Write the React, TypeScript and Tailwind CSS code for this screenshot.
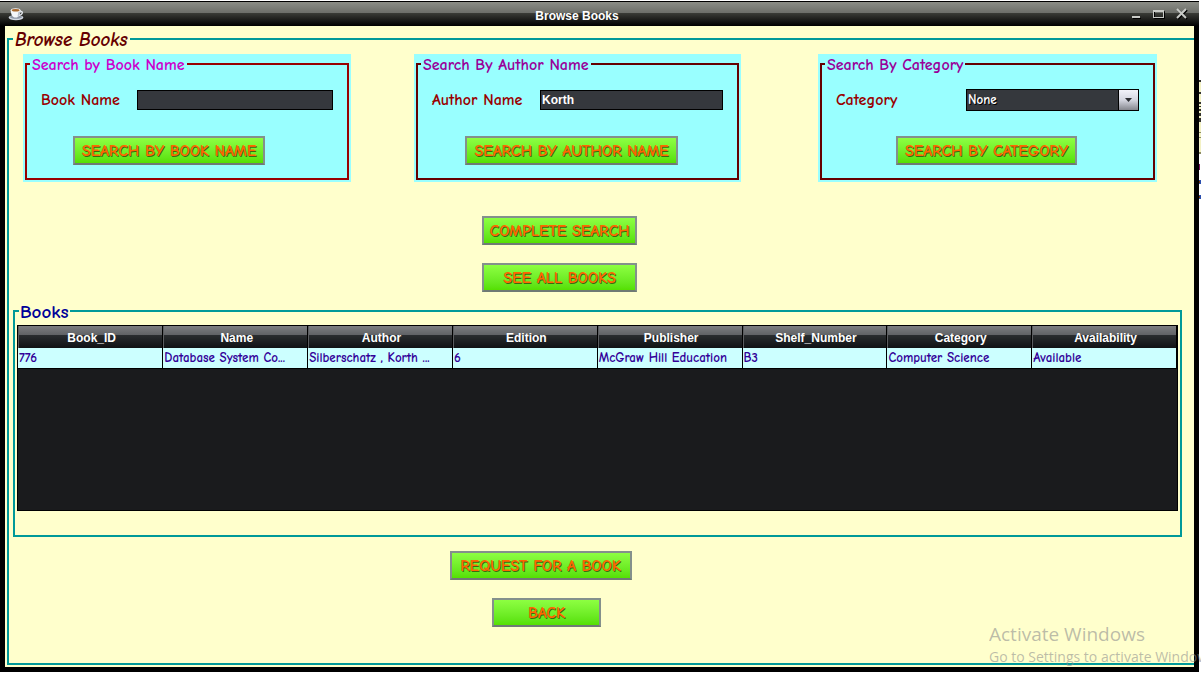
import type { ReactNode } from "react";

const comic = "font-['Comic_Sans_MS','Comic_Neue','Open_Sans',sans-serif]";

const columns = [
  "Book_ID",
  "Name",
  "Author",
  "Edition",
  "Publisher",
  "Shelf_Number",
  "Category",
  "Availability",
];

const books = [
  [
    "776",
    "Database System Co...",
    "Silberschatz , Korth ...",
    "6",
    "McGraw Hill Education",
    "B3",
    "Computer Science",
    "Available",
  ],
];

function CupIcon() {
  return (
    <svg width="17" height="14" viewBox="0 0 17 14" aria-hidden="true">
      <ellipse cx="8" cy="10.6" rx="7.4" ry="2.7" fill="#d3d9e3" />
      <ellipse cx="8" cy="10" rx="6" ry="1.8" fill="#8e97a6" />
      <path d="M12 4.5c3-.8 3.600 3 -1 3.800" fill="none" stroke="#e8ecf2" strokeWidth="1.300" />
      <path d="M2.800 3.200c0 4 1.400 7.300 4.800 7.300s4.900-3.300 4.900-7.300z" fill="#f4f6fa" />
      <path d="M9.500 9.800c2-1.200 3-3.600 3-6.600l-2 1z" fill="#b9c1ce" />
      <ellipse cx="7.650" cy="3.200" rx="4.900" ry="2" fill="#f7f7f7" />
      <ellipse cx="7.650" cy="3.300" rx="3.900" ry="1.300" fill="#a8682c" />
    </svg>
  );
}

function TitleBar() {
  const button = "flex h-4 w-[17px] items-center justify-center";
  return (
    <header className="grid h-[25px] shrink-0 grid-cols-[1fr_auto_1fr] items-center border-t border-black bg-[linear-gradient(#8b8d86_0,#6c6e69_11px,#3a3c37_11px,#000_24px)] pl-2 pr-[9px]">
      <CupIcon />
      <h1 className="pt-1 pr-[44px] font-['Liberation_Sans',sans-serif] text-[12px] leading-[16px] font-bold text-white">
        Browse Books
      </h1>
      <div className="flex justify-end gap-[6px]">
        <button type="button" aria-label="Minimize" className={button}>
          <svg width="14" height="14" viewBox="0 0 14 14">
            <path d="M4 11h8v1H4z" fill="#000" />
            <path d="M3 9h8v2H3z" fill="#c9cbc7" />
          </svg>
        </button>
        <button type="button" aria-label="Maximize" className={button}>
          <svg width="14" height="14" viewBox="0 0 14 14">
            <path d="M2.500 4.500h10v7h-10z" fill="none" stroke="#000" />
            <path d="M1 3h11v8H1zM2 5v5h9V5z" fillRule="evenodd" fill="#c9cbc7" />
          </svg>
        </button>
        <button type="button" aria-label="Close" className={button}>
          <svg width="14" height="14" viewBox="0 0 14 14" fill="none" strokeWidth="2">
            <path d="M3 3l9 9M12 3l-9 9" stroke="#000" />
            <path d="M2 2l9 9M11 2l-9 9" stroke="#c9cbc7" />
          </svg>
        </button>
      </div>
    </header>
  );
}

function GreenButton({ width, children }: { width: string; children: ReactNode }) {
  return (
    <button
      type="button"
      className={`${comic} ${width} h-[29px] shrink-0 whitespace-nowrap border-2 border-[#84908c] border-b-[#6f7a74] bg-linear-to-b from-[#8dff41] to-[#55e000] text-[16px] leading-[20px] font-bold text-[#ff6600] [text-shadow:1px_1px_0_#3a6a10]`}
    >
      {children}
    </button>
  );
}

type PanelProps = {
  title: string;
  place: string;
  border: string;
  titleColor: string;
  field: ReactNode;
  action: ReactNode;
  actionPad: string;
};

function SearchPanel({ title, place, border, titleColor, field, action, actionPad }: PanelProps) {
  return (
    <form className={`${place} h-32 bg-[#99ffff] px-0.5 pb-0.5`} onSubmit={(e) => e.preventDefault()}>
      <fieldset className={`h-[126px] min-w-0 border-2 ${border}`}>
        <legend
          className={`${comic} ml-[3px] h-[20px] whitespace-nowrap px-0.5 text-[16px] leading-[22px] font-bold ${titleColor}`}
        >
          {title}
        </legend>
        <div className="mt-[14px] flex h-6 items-center pr-[14px] pl-[14px]">{field}</div>
        <div className={`mt-[24px] flex ${actionPad}`}>{action}</div>
      </fieldset>
    </form>
  );
}

const labelClass = `${comic} shrink-0 text-[16px] leading-[20px] font-bold text-[#990000]`;
const inputClass =
  "h-[20px] min-w-0 flex-1 border border-black bg-[#35383d] px-px font-['Liberation_Sans',sans-serif] text-[12px] font-bold text-white";

function BooksTable() {
  return (
    <div className="h-[186px] border border-black bg-[#1a1b1d]">
      <table className="w-full table-fixed border-collapse">
        <thead>
          <tr>
            {columns.map((c) => (
              <th
                key={c}
                scope="col"
                className="h-[22px] border-r border-black bg-[linear-gradient(#7c7d80_0,#606265_9px,#2a2d30_9px,#101214_22px)] p-0 text-center font-['Liberation_Sans',sans-serif] text-[12px] leading-[20px] font-bold text-white"
              >
                <div className="h-[22px] border-l border-[#5b5d60] pt-0.5 pl-0.5">{c}</div>
              </th>
            ))}
          </tr>
        </thead>
        <tbody>
          {books.map((row) => (
            <tr key={row[0]}>
              {row.map((cell, i) => (
                <td
                  key={columns[i]}
                  className={`${comic} h-[20px] overflow-hidden whitespace-nowrap border-r border-b border-black bg-[#ccffff] p-0 pl-px text-[13px] leading-[19px] font-bold text-[#330099]`}
                >
                  {cell}
                </td>
              ))}
            </tr>
          ))}
        </tbody>
      </table>
    </div>
  );
}

function BackgroundEdge() {
  return (
    <svg
      width="2"
      height="120"
      viewBox="0 0 2 120"
      className="absolute top-[80px] right-0"
      aria-hidden="true"
    >
      <path d="M0 0h2v73H0z" fill="#f3f1c4" />
      <path d="M0 0h2v2H0zM0 12h2v2H0zM0 22h2v2H0zM0 26h2v1H0zM0 29h2v2H0zM0 33h2v3H0zM0 38h2v4H0z" fill="#33332e" />
      <path d="M0 52h2v1H0zM0 57h2v1H0zM0 72h2v2H0z" fill="#8c8b62" />
      <path d="M0 84h1v6H0z" fill="#7a1560" />
      <path d="M0 100h2v4H0zM0 115h2v4H0z" fill="#2b4fae" />
      <path d="M0 101h1v2H0zM0 116h1v2H0z" fill="#7a3a12" />
    </svg>
  );
}

export default function App() {
  return (
    <div className="relative min-h-screen overflow-hidden bg-white pt-px pr-0.5 pb-0.5">
      <div className="flex min-h-[671px] flex-col bg-black">
        <TitleBar />
        <main className="mx-[5px] mb-[5px] flex flex-1 flex-col bg-[#ffffcc] pb-0.5 pl-0.5">
          <fieldset className="min-w-0 flex-1 border-2 border-r-0 border-[#009999] pb-[28px]">
            <legend
              className={`${comic} ml-[4px] h-[26px] px-0.5 text-[19px] leading-[28px] font-bold text-[#660000] italic`}
            >
              Browse Books
            </legend>
            <div className="mt-0.5 grid grid-cols-[328fr_63fr_327fr_77fr_339fr] pr-[37px] pl-[14px]">
              <SearchPanel
                title="Search by Book Name"
                place="col-start-1"
                border="border-[#990000]"
                titleColor="text-[#cc00cc]"
                actionPad="pl-[46px]"
                field={
                  <>
                    <label htmlFor="book" className={`${labelClass} w-[96px]`}>
                      Book Name
                    </label>
                    <input id="book" type="text" className={inputClass} />
                  </>
                }
                action={<GreenButton width="w-[192px]">SEARCH BY BOOK NAME</GreenButton>}
              />
              <SearchPanel
                title="Search By Author Name"
                place="col-start-3"
                border="border-[#660000]"
                titleColor="text-[#990099]"
                actionPad="pl-[47px]"
                field={
                  <>
                    <label htmlFor="author" className={`${labelClass} w-[108px]`}>
                      Author Name
                    </label>
                    <input id="author" type="text" defaultValue="Korth" className={inputClass} />
                  </>
                }
                action={<GreenButton width="w-[213px]">SEARCH BY AUTHOR NAME</GreenButton>}
              />
              <SearchPanel
                title="Search By Category"
                place="col-start-5"
                border="border-[#660000]"
                titleColor="text-[#990099]"
                actionPad="pl-[74px]"
                field={
                  <>
                    <label htmlFor="category" className={`${labelClass} w-[130px]`}>
                      Category
                    </label>
                    <div className="flex h-[22px] min-w-0 flex-1 border border-black bg-[linear-gradient(#f2f3fa,#d4d6e0_50%,#85878e)]">
                      <select
                        id="category"
                        className={`${comic} h-[20px] w-full appearance-none bg-[linear-gradient(#35383d,#35383d),linear-gradient(#000,#000)] bg-[length:calc(100%-20px)_100%,calc(100%-19px)_100%] bg-no-repeat pl-px text-[13px] leading-[20px] font-bold text-white [text-shadow:1px_1px_0_#000]`}
                      >
                        <option>None</option>
                      </select>
                      <svg
                        width="7"
                        height="4"
                        viewBox="0 0 7 4"
                        className="pointer-events-none -ml-[13px] mr-[6px] shrink-0 self-center"
                        aria-hidden="true"
                      >
                        <path d="M0 0h7L3.500 4z" fill="#2b2d31" />
                      </svg>
                    </div>
                  </>
                }
                action={<GreenButton width="w-[181px]">SEARCH BY CATEGORY</GreenButton>}
              />
            </div>

            <div className="mt-[34px] flex flex-col items-center gap-[18px] pr-[84px]">
              <GreenButton width="w-[155px]">COMPLETE SEARCH</GreenButton>
              <GreenButton width="w-[155px]">SEE ALL BOOKS</GreenButton>
            </div>

            <fieldset className="mt-[5px] mr-[12px] ml-[4px] min-w-0 border-2 border-[#009999] px-0.5 pb-[24px]">
              <legend
                className={`${comic} ml-0.5 h-[28px] px-[1px] text-[19px] leading-[30px] font-bold text-[#000099]`}
              >
                Books
              </legend>
              <BooksTable />
            </fieldset>

            <div className="mt-[14px] flex flex-col items-center pr-[122px]">
              <GreenButton width="w-[182px]">REQUEST FOR A BOOK</GreenButton>
            </div>
            <div className="mt-[18px] flex flex-col items-center pr-[110px]">
              <GreenButton width="w-[109px]">BACK</GreenButton>
            </div>
          </fieldset>
        </main>
      </div>

      <BackgroundEdge />

      <aside className="pointer-events-none absolute right-0 bottom-[7px] w-[212px] overflow-hidden whitespace-nowrap font-['Open_Sans',sans-serif] text-[#8f8f8f]/60">
        <p className="text-[19px] leading-[26px]">Activate Windows</p>
        <p className="text-[14px] leading-[20px]">Go to Settings to activate Windows</p>
      </aside>
    </div>
  );
}
